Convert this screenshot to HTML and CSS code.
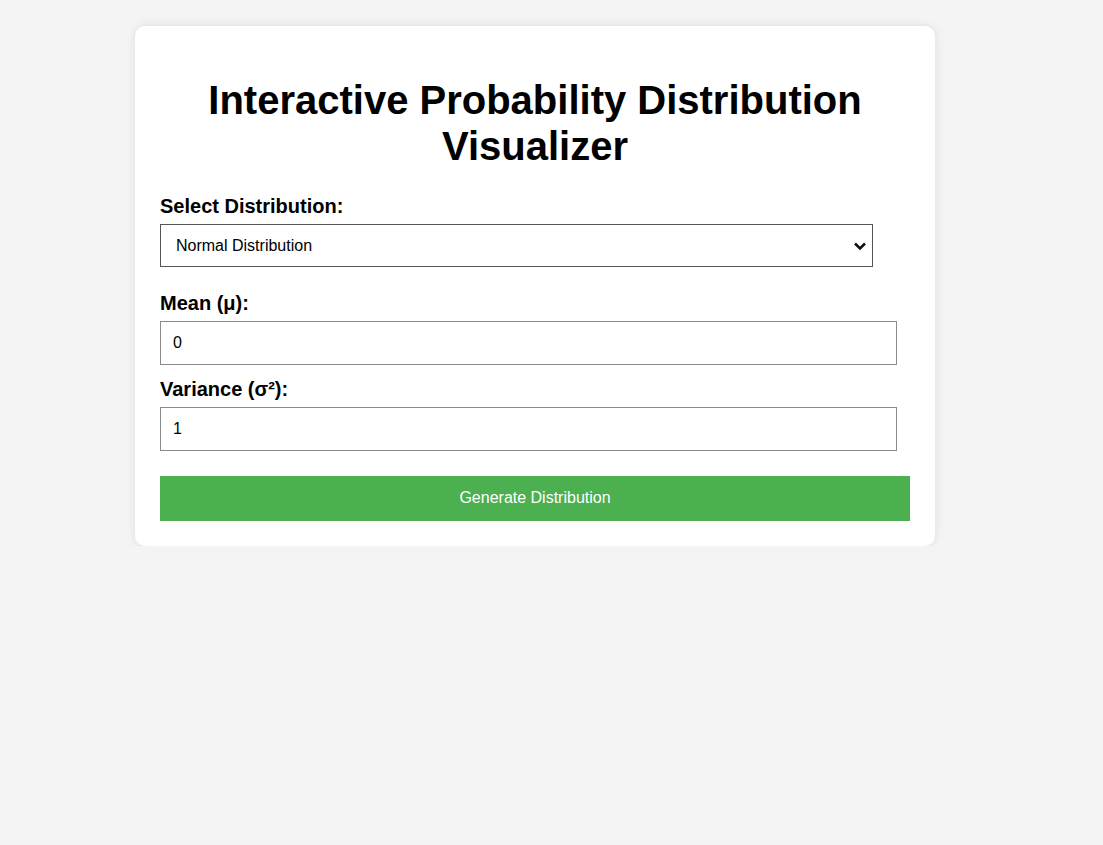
FILE: index.html
```html
<!DOCTYPE html>
<html lang="en">
<head>
<meta charset="utf-8">
<title>Interactive Probability Distribution Visualizer</title>
<link rel="stylesheet" href="styles.css">
</head>
<body>
<div class="card">
  <h1 class="title">Interactive Probability Distribution Visualizer</h1>
  <label class="field-label" for="dist">Select Distribution:</label>
  <div class="select-wrap">
    <select id="dist" class="select">
      <option>Normal Distribution</option>
      <option>Binomial Distribution</option>
      <option>Poisson Distribution</option>
    </select>
    <svg class="chevron" width="14" height="10" viewBox="0 0 14 10" aria-hidden="true">
      <path d="M2 2.5 L7 7.5 L12 2.5" fill="none" stroke="#111" stroke-width="2.6" stroke-linecap="butt" stroke-linejoin="miter"/>
    </svg>
  </div>
  <div class="params">
    <label class="field-label" for="mean">Mean (μ):</label>
    <input id="mean" class="input input-first" type="number" value="0">
    <label class="field-label" for="variance">Variance (σ²):</label>
    <input id="variance" class="input" type="number" value="1">
  </div>
  <button class="btn" type="button">Generate Distribution</button>
</div>
</body>
</html>
```
FILE: styles.css
```css
html, body {
  margin: 0;
  padding: 0;
}
body {
  background: #f4f4f4;
  font-family: "Liberation Sans", Arial, sans-serif;
  color: #000;
  padding: 26px 0 0 135px;
}
.card {
  width: 800px;
  box-sizing: border-box;
  background: #fff;
  border-radius: 10px;
  box-shadow: 0 0 10px rgba(0, 0, 0, 0.1);
  padding: 25px;
}
.title {
  font-size: 40px;
  font-weight: bold;
  text-align: center;
  margin: 26px 0 26px;
  line-height: 46px;
}
.field-label {
  display: block;
  font-size: 20px;
  font-weight: bold;
  line-height: 23px;
  margin-bottom: 6px;
}
.select-wrap {
  position: relative;
  width: 713px;
  margin: 0 0 25px;
}
.select {
  display: block;
  width: 713px;
  height: 43px;
  box-sizing: border-box;
  font-family: "Liberation Sans", Arial, sans-serif;
  font-size: 16px;
  padding: 0 30px 0 15px;
  border: 1px solid #555;
  border-radius: 0;
  background: #fff;
  color: #000;
  margin: 0;
  -webkit-appearance: none;
  appearance: none;
}
.chevron {
  position: absolute;
  right: 6px;
  top: 17px;
  pointer-events: none;
}
.input {
  display: block;
  width: 737px;
  height: 44px;
  box-sizing: border-box;
  font-family: "Liberation Sans", Arial, sans-serif;
  font-size: 16px;
  padding: 0 12px;
  border: 1px solid #8a8a8a;
  border-radius: 0;
  color: #000;
  margin: 0;
  -moz-appearance: textfield;
}
.input::-webkit-outer-spin-button,
.input::-webkit-inner-spin-button {
  -webkit-appearance: none;
  margin: 0;
}
.input-first {
  margin-bottom: 13px;
}
.btn {
  display: block;
  width: 100%;
  height: 45px;
  margin-top: 25px;
  background: #4caf50;
  color: #fff;
  border: none;
  border-radius: 0;
  font-family: "Liberation Sans", Arial, sans-serif;
  font-size: 16px;
  line-height: 18px;
  padding: 0 0 2px;
  cursor: pointer;
}
```
